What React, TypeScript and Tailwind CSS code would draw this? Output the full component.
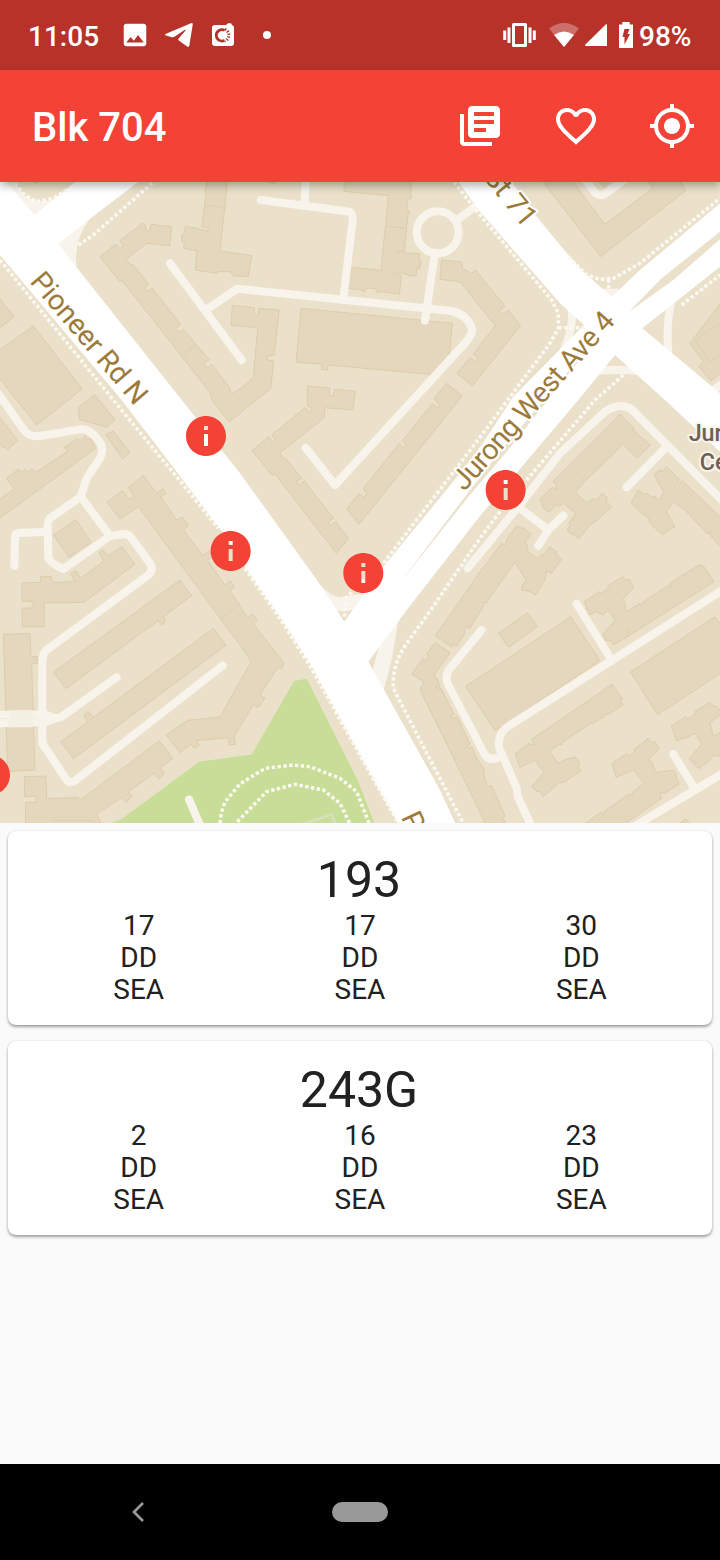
import React from "react";
import { MdLibraryBooks, MdFavoriteBorder, MdGpsFixed, MdImage } from "react-icons/md";

const INFO =
  "M12 2C6.48 2 2 6.48 2 12s4.48 10 10 10 10-4.48 10-10S17.52 2 12 2zm1 15h-2v-6h2v6zm0-8h-2V7h2v2z";

// Map units are thirds of a pixel; groups split the map into a 3x3 grid of tiles.
const tiles: { at: string; shapes: string[] }[] = [
  {
    at: "translate(0 0)",
    shapes: [
      "300,230 347,192 359,205 369,199 360,182 427,130 434,132 440,153 450,153 453,133 515,140 509,197 440,190 379,238 393,256 400,254 446,313 434,322 442,334 457,325 542,433 527,445 536,458 550,448 628,540 612,550 622,565 636,553 690,625 693,640 700,638 720,627 760,593 773,443 693,436 697,376 763,383 762,405 774,405 777,385 838,390 822,527 802,527 802,540 821,542 812,627 768,660 720,700 688,725 635,660 632,640 365,300 358,303",
      "625,0 615,30 618,40 605,140 625,145 625,153 557,138 553,160 545,165 545,183 553,190 551,205 590,212 586,270 650,280 655,275 690,275 700,287 745,290 755,227 660,213 683,0",
      "-5,512 100,438 247,627 205,660 110,735 50,660 -5,590",
      "-5,350 43,410 -5,447",
      "80,-5 108,11 130,-5",
      "265,660 283,643 345,720 320,742 238,718 235,682",
    ],
  },
  {
    at: "translate(720 0)",
    shapes: [
      "312,0 312,34 445,47 423,271 333,262 325,325 365,330 372,336 380,324 408,327 413,339 420,334 478,342 485,288 465,280 467,275 510,287 528,288 531,265 540,265 543,242 537,240 538,222 516,219 515,222 472,212 470,217 493,213 504,103 511,97 502,90 500,58 515,55 512,40 516,0",
      "183,385 637,430 628,527 582,584 265,555 262,570 244,568 245,552 168,547",
      "60,0 104,11 104,0",
      "605,240 667,246 667,267 680,270 692,283 707,270 722,290 795,378 777,392 787,403 805,390 842,437 697,617 650,580 690,532 708,545 714,535 700,523 720,495 766,437 720,380 660,305 600,298",
      "582,655 620,610 667,648 357,1033 320,987 357,940 372,952 381,940 370,925 478,790 490,803 498,793 487,782 578,670 592,684 598,674",
      "202,618 270,624 267,645 280,648 284,628 346,634 338,690 254,683 253,713 119,820 133,838 137,835 185,895 168,905 177,915 193,903 280,1015 264,1027 272,1037 287,1025 326,1075 289,1120 103,880 97,887 36,812 87,770 97,785 106,778 95,765 195,683 207,697 216,685 202,678",
    ],
  },
  {
    at: "translate(1440 0)",
    shapes: [
      "185,0 362,230 616,33 600,0 500,0 518,25 375,133 275,0",
      "352,0 372,22 395,0",
      "725,365 629,490 672,545 656,558 692,602 725,580",
    ],
  },
  {
    at: "translate(0 660)",
    shapes: [
      "-5,45 53,122 22,150 15,140 8,143 -5,130",
      "317,103 340,94 390,157 368,177",
      "-5,300 42,267 20,235 55,208 65,217 75,207 87,217 97,206 108,217 202,155 193,142 232,115 240,122 255,107 262,120 270,115 287,145 -5,358",
      "160,405 228,359 273,427 208,472",
      "321,306 368,272 388,298 402,288 385,262 430,226 470,280 488,266 498,280 483,292 530,360 546,350 565,376 550,390 608,466 628,452 640,470 622,480 675,555 690,543 705,560 690,573 742,652 758,642 772,660 760,672 853,790 845,806 833,802 780,885 795,895 775,922 760,915 720,980 702,1008 706,1033 688,1035 685,1013 590,1022 598,1035 583,1045 572,1032 540,1058 499,1005 563,961 660,951 720,843 754,785 720,735 642,630 415,320 360,357",
      "66,549 121,547 121,530 155,530 156,547 225,545 213,520 228,512 242,535 312,483 297,460 308,450 323,468 365,440 405,492 252,607 132,609 133,680 67,680 66,625 100,623 100,605 66,603",
      "160,817 375,660 540,540 575,587 490,650 497,664 485,675 473,663 198,866",
    ],
  },
  {
    at: "translate(1440 660)",
    shapes: [
      "420,42 463,85 458,93 466,96 511,135 472,175 428,132 388,175 380,165 378,172 384,178 315,243 308,237 312,248 285,278 322,308 340,295 345,302 367,280 382,292 378,302 395,322 340,370 333,373 296,416 285,405 272,402 262,390 270,375 266,370 288,340 250,310 235,320 230,313 207,337 190,325 180,297 217,262 228,268 230,258 220,243 380,85",
      "110,378 123,385 128,383 153,402 137,425 145,447 140,452 172,475 185,462 190,466 210,440 230,455 228,462 245,477 215,520 200,513 195,540 167,585 150,575 125,570 128,555 138,540 105,487 78,525 70,520 75,528 18,610 10,605 12,615 -30,685 -40,680 -48,690 -45,700 -70,738 -82,733 -85,742 -135,707 -80,630 0,515 65,430 75,435 82,415",
      "560,200 597,238 592,247 602,250 605,240 725,355 725,445 690,405 692,395 682,402 620,335 580,305 560,335 585,380 575,385 548,405 510,370 505,352 490,345 453,308 475,270 493,283 500,280 517,292 525,288 535,302 552,275 535,250 522,222 540,210 548,213",
      "313,605 358,575 363,580 385,565 383,558 428,530 437,540 447,537 460,563 430,597 440,635 480,610 485,620 488,607 563,557 572,563 570,550 612,522 615,528 618,518 660,494 672,500 702,545 450,705 442,692 440,702 448,708 400,735 390,720 378,722 368,705 388,680 405,660 385,630 368,645 350,635 328,645",
      "55,700 142,638 172,680 86,742",
    ],
  },
  {
    at: "translate(0 1290)",
    shapes: [
      "10,73 90,70 93,140 112,140 112,160 95,162 105,480 23,484",
      "182,395 263,337 252,316 265,304 280,322 640,55 678,106 221,446",
      "73,500 138,498 140,565 235,563 237,573 478,393 519,445 480,473 494,490 477,508 463,490 385,545 397,557 378,577 365,563 290,612 305,645 77,645 76,577 109,576 109,559 74,560",
    ],
  },
  {
    at: "translate(720 1290)",
    shapes: [
      "585,97 630,128 582,195 592,207 600,230 588,228 590,235 602,234 643,313 632,318 640,325 650,318 690,403 680,408 685,415 695,410 712,450 735,480 730,487 742,530 755,527 795,618 788,625 802,645 737,645 720,605 540,240 552,215 515,193 548,145 558,150 567,140 560,132",
    ],
  },
  {
    at: "translate(1440 1290)",
    shapes: [
      "-43,229 272,20 360,152 46,362",
      "451,186 705,20 725,48 725,188 533,314",
      "105,432 148,400 150,405 160,402 155,388 397,222 428,268 422,272 428,285 382,315 377,310 375,318 335,342 330,337 325,345 250,395 245,405 238,403 208,422 235,460 260,447 288,442 300,462 295,465 302,483 255,515 235,520 190,560 180,545 170,545 155,530 193,487 170,460 176,448 150,458 120,472 112,450",
      "396,460 440,430 447,437 465,425 463,418 505,385 515,397 525,395 538,417 503,452 515,455 528,487 580,480 588,490 590,505 598,522 550,552 548,545 540,550 545,565 430,645 310,645 365,605 372,615 375,602 450,550 455,558 460,545 492,520 460,480 408,502 402,480",
      "574,348 617,320 622,327 645,313 645,305 688,277 700,287 712,290 725,312 690,337 700,380 725,365 725,440 700,435 690,450 657,476 640,462 628,445 665,402 645,370 620,383 590,392",
      "590,645 618,626 632,645",
    ],
  },
];

const MINOR = [
  "M510 250L725 540",
  "M625 385L712 326L1355 393Q1405 405 1417 450Q1415 468 1390 495L1005 915L917 803",
  "M782 60L1040 94Q1060 96 1058 118L1030 360",
  "M918 0L913 70",
  "M1375 117L1445 65",
  "M1303 230L1275 422",
  "M-20 620L75 755Q90 772 120 768L240 748Q270 745 295 780Q315 805 300 835L260 895L242 950L150 1015Q143 1022 143 1040L145 1135Q150 1150 190 1167L330 1068L372 1062Q385 1060 395 1075L450 1150Q462 1170 445 1185L140 1410Q127 1420 127 1450V1690L200 1800Q210 1812 225 1802L668 1457",
  "M242 950L330 1068",
  "M143 1055L58 1059Q45 1059 45 1072L43 1158",
  "M350 1492L185 1610Q170 1618 140 1614H110",
  "M1403 1165L1555 980L1680 820L1815 695Q1860 665 1895 688L2165 960",
  "M1995 805L1880 922",
  "M1560 985L1645 1050L1615 1097M1645 1050L1690 1007",
  "M1730 1272L1835 1440",
  "M2170 1229L1530 1635Q1490 1660 1498 1705L1550 1825L1553 1850L1595 1940",
  "M1445 1350L1350 1465Q1332 1490 1345 1515L1455 1725Q1472 1747 1502 1728",
  "M1910 1935L2165 1782",
  "M2020 1722L2080 1820",
  "M1750 -10L1785 38Q1800 52 1818 40L1880 -5",
  "M1715 385Q1722 440 1692 510",
  "M2013 370Q1998 430 2005 520",
  "M1800 572Q1850 568 1920 573",
  "M1800 338H1850",
  "M2100 660L2165 612",
  "M567 1858L602 1940",
];

const DOTTED = [
  "M0 240L340 660L530 890L655 1045M735 1165L840 1315L925 1450L990 1565L1150 1850L1197 1932",
  "M235 195L280 165L460 6",
  "M45 10L75 45L110 65L160 55L200 30",
  "M1362 6L1440 105L1655 360L1675 400V445L1650 490L1430 785L1150 1150L1040 1250L1033 1315",
  "M1675 443H1755",
  "M1705 230L1760 285L1800 298L1840 295L1920 250L2160 55",
  "M1826 298V330",
  "M2045 375L2160 285",
  "M1870 585L1785 660L1580 900M1500 995L1440 1075L1275 1315L1220 1390Q1175 1455 1180 1525L1270 1700L1390 1930",
  "M660 1930Q665 1880 680 1860L720 1812L795 1765L880 1755L930 1760L1020 1795L1070 1835L1108 1932",
  "M712 1925L800 1835L885 1813L970 1830L1020 1870L1050 1932",
];

function CityMap() {
  return (
    <svg viewBox="0 6 2160 1923" className="block h-[641px] w-full">
      <rect y="0" width="2160" height="1935" fill="#ebe1cb" />
      <path
        d="M335 1929L365 1917L598 1745L720 1728L755 1724L882 1503L920 1496L1075 1805L1125 1935H335Z"
        fill="#c8dd97"
      />
      <g fill="#e4d7bd" stroke="#dccdab" strokeWidth="3">
        {tiles.map((t) => (
          <g key={t.at} transform={t.at}>
            {t.shapes.map((s) => (
              <polygon key={s} points={s} />
            ))}
          </g>
        ))}
      </g>
      <path
        d="M612 76L673 82M547 527L588 492M1158 139L1217 145M2160 430L2085 480L2130 545L2160 525M665 1315L720 1270M140 1925V1935M155 1922H275L287 1935"
        fill="none"
        stroke="#dccdab"
        strokeWidth="2.5"
      />
      <path d="M910 1932L995 1903L1006 1932" fill="none" stroke="#d9dfba" strokeWidth="8" />
      <g fill="#f8f4ec">
        <path d="M20 6L103 108L165 58L115 66L75 48L42 6Z" />
        <path d="M172 190L270 115Q215 190 232 270Z" />
        <path d="M1195 1320Q1185 1380 1175 1440L1150 1535L1118 1468L1137 1400Z" />
        <path d="M955 1210Q990 1250 1020 1252L1095 1240L1065 1288Q1040 1296 1020 1294L985 1285Z" />
      </g>
      <g fill="none" stroke="#f8f4ec" strokeWidth="24" strokeLinecap="round" strokeLinejoin="round">
        {MINOR.map((d) => (
          <path key={d} d={d} />
        ))}
        <circle cx="1313" cy="157" r="63" />
      </g>
      <path d="M0 1592H140L170 1604V1626L140 1638L0 1642Z" fill="#f8f4ec" />
      <path d="M28 1591H98V1642H24Z" fill="#f5f0e4" />
      <path d="M0 1616H24M92 1616H115" stroke="#f2eadb" strokeWidth="3" />
      <path
        d="M0 6H20L103 105L225 6H415L265 120L175 192L232 265L545 660L720 880L850 1060L965 1220L1033 1325L1150 1160L1380 880L1445 795L1540 650L1752 435L1680 370L1440 95L1375 6H1535L1610 110L1705 225L1750 275L1835 350L1920 270L2160 70V155L1985 295L1885 397L2020 300L2160 178V260L1927 445L2160 640V815L1995 660L1845 525L1735 660L1440 1008L1220 1290L1105 1445L1152 1530L1320 1830L1368 1935H1197L930 1450L840 1310L735 1160L670 1060L530 875L365 660L0 225Z"
        fill="#fff"
      />
      <path d="M1195 1215L1395 950L1500 815L1790 475L1530 803L1405 950Z" fill="#ebe1cb" />
      <g fill="none" stroke="#fcf9f2" strokeWidth="10.5" strokeDasharray="10 7.5">
        {DOTTED.map((d) => (
          <path key={d} d={d} />
        ))}
      </g>
      <g
        className="font-['Roboto','Liberation_Sans',sans-serif]"
        fill="#9c7b3a"
        stroke="#fff"
        strokeWidth="12"
        strokeLinejoin="round"
        paintOrder="stroke"
        fontSize="86"
      >
        <text transform="translate(87 306) rotate(49.7)" textLength="490">Pioneer Rd N</text>
        <text transform="translate(1393 936) rotate(-48.2)" textLength="684">Jurong West Ave 4</text>
        <text transform="translate(1572 146) rotate(51)" textAnchor="end">St 71</text>
        <text transform="translate(1202 1911) rotate(65)">Pioneer Rd N</text>
        <g fill="#715f54" stroke="#f8f4ec" fontSize="70" fontWeight="500">
          <text x="2066" y="783">Jurong</text>
          <text x="2099" y="869">Central</text>
        </g>
      </g>
      <g fill="#f44336">
        <path transform="translate(546 696) scale(6)" d={INFO} />
        <path transform="translate(620 1041) scale(6)" d={INFO} />
        <path transform="translate(1018 1107) scale(6)" d={INFO} />
        <path transform="translate(1445 858) scale(6)" d={INFO} />
        <path transform="translate(-102 1713) scale(6)" d={INFO} />
      </g>
    </svg>
  );
}

function StatusBar() {
  return (
    <div className="flex h-[70px] items-center bg-[#b73229] pr-[29px] pl-7 text-[28px] leading-none font-medium text-white">
      <span className="w-[92px] pt-[3px]">11:05</span>
      <MdImage className="size-[30px]" />
      <svg viewBox="0 0 28 26" className="ml-[15px] h-[26px] w-7 fill-white">
        <path d="M26 1.2Q28 .4 27.7 2.8L24.4 23.2Q24 25.6 21.8 24.2L13.8 18.4Q12.7 17.5 13.7 16.4L20.5 8.6Q21 7.4 19.5 8L9 15Q8 15.6 6.8 15.2L1 13.5Q-.8 12.7 1 11.7Z" />
      </svg>
      <svg viewBox="0 0 22 24" className="ml-[19px] h-6 w-[22px]">
        <path d="M3 2H14L16 .2H19L20 2Q22 2.5 22 4.5V20Q22 23 19 23H3Q0 23 0 20V5Q0 2 3 2Z" fill="#fff" />
        <path d="M12.5 7.2A5.7 5.7 0 1 0 12.5 17.4" fill="none" stroke="#b73229" strokeWidth="2.8" />
        <path d="M13 6.5A6.2 6.2 0 0 1 13 18" fill="none" stroke="#b73229" strokeWidth="3" strokeDasharray="1.3 1.5" />
      </svg>
      <span className="ml-[29px] size-2 rounded-full bg-white" />
      <svg viewBox="0 0 33 24" className="ml-auto h-6 w-[33px]">
        <path d="M10.5 1.5h12v21h-12z" fill="none" stroke="#fff" strokeWidth="3" strokeLinejoin="round" />
        <path d="M1.7 7.5V17M6 4.5V20M27 4.5V20M31.3 7.5V17" stroke="#fff" strokeWidth="3" />
      </svg>
      <svg viewBox="0 0 30 24" className="ml-[13px] h-6 w-[30px]">
        <path d="M0 5.5Q15-5.5 30 5.5L15 24Z" fill="#fff" opacity=".3" />
        <path d="M5 12Q15 5 25 12L15 24Z" fill="#fff" />
      </svg>
      <svg viewBox="0 0 22 22" className="ml-1.5 h-[22px] w-[22px] fill-white">
        <path d="M1 22H22V1Q22-.5 20.7.6L.4 20.6Q-.4 22 1 22Z" />
      </svg>
      <svg viewBox="0 0 14 26" className="ml-3 h-[26px] w-[14px]">
        <path d="M3.3 0h7.4v2.5H14V26H0V2.5h3.3Z" fill="#fff" />
        <path d="M5.5 7H10.5L8.5 12H11L5.5 22.5V15H3.5Z" fill="#b73229" />
      </svg>
      <span className="ml-1.5 w-[52px] pt-[3px] whitespace-nowrap">98%</span>
    </div>
  );
}

function AppBar() {
  return (
    <header className="relative z-10 flex h-[112px] items-center bg-[#f44336] pr-6 pl-8 text-white shadow-[0_4px_8px_rgba(0,0,0,0.3)]">
      <h1 className="flex-1 pt-1 text-[40px] leading-none font-medium">Blk 704</h1>
      <div className="flex gap-12">
        <MdLibraryBooks className="size-12" />
        <MdFavoriteBorder className="size-12" />
        <MdGpsFixed className="size-12" />
      </div>
    </header>
  );
}

function BusCard({ service, times }: { service: string; times: string[] }) {
  return (
    <section className="h-[194px] rounded-lg bg-white pt-5 text-center text-[#212121] shadow-[0_2px_3px_rgba(0,0,0,0.35),0_0_2px_rgba(0,0,0,0.12)]">
      <h2 className="pr-0.5 text-[50px] leading-[58px]">{service}</h2>
      <div className="grid grid-cols-3 px-5 pt-px text-[28px] leading-8">
        {times.map((t, i) => (
          <div key={i}>
            <div>{t}</div>
            <div>DD</div>
            <div>SEA</div>
          </div>
        ))}
      </div>
    </section>
  );
}

export default function App() {
  return (
    <div className="flex h-[1560px] w-[720px] flex-col overflow-hidden bg-[#fafafa] font-['Roboto','Liberation_Sans',sans-serif]">
      <StatusBar />
      <AppBar />
      <CityMap />
      <main className="flex flex-1 flex-col gap-4 p-2">
        <BusCard service="193" times={["17", "17", "30"]} />
        <BusCard service="243G" times={["2", "16", "23"]} />
      </main>
      <nav className="flex h-24 items-center bg-black">
        <svg viewBox="0 0 12 20" className="ml-[132px] h-5 w-3">
          <path d="M11 1L2 10L11 19" fill="none" stroke="#999" strokeWidth="2.7" />
        </svg>
        <span className="ml-[188px] h-5 w-14 rounded-full bg-[#999]" />
      </nav>
    </div>
  );
}
